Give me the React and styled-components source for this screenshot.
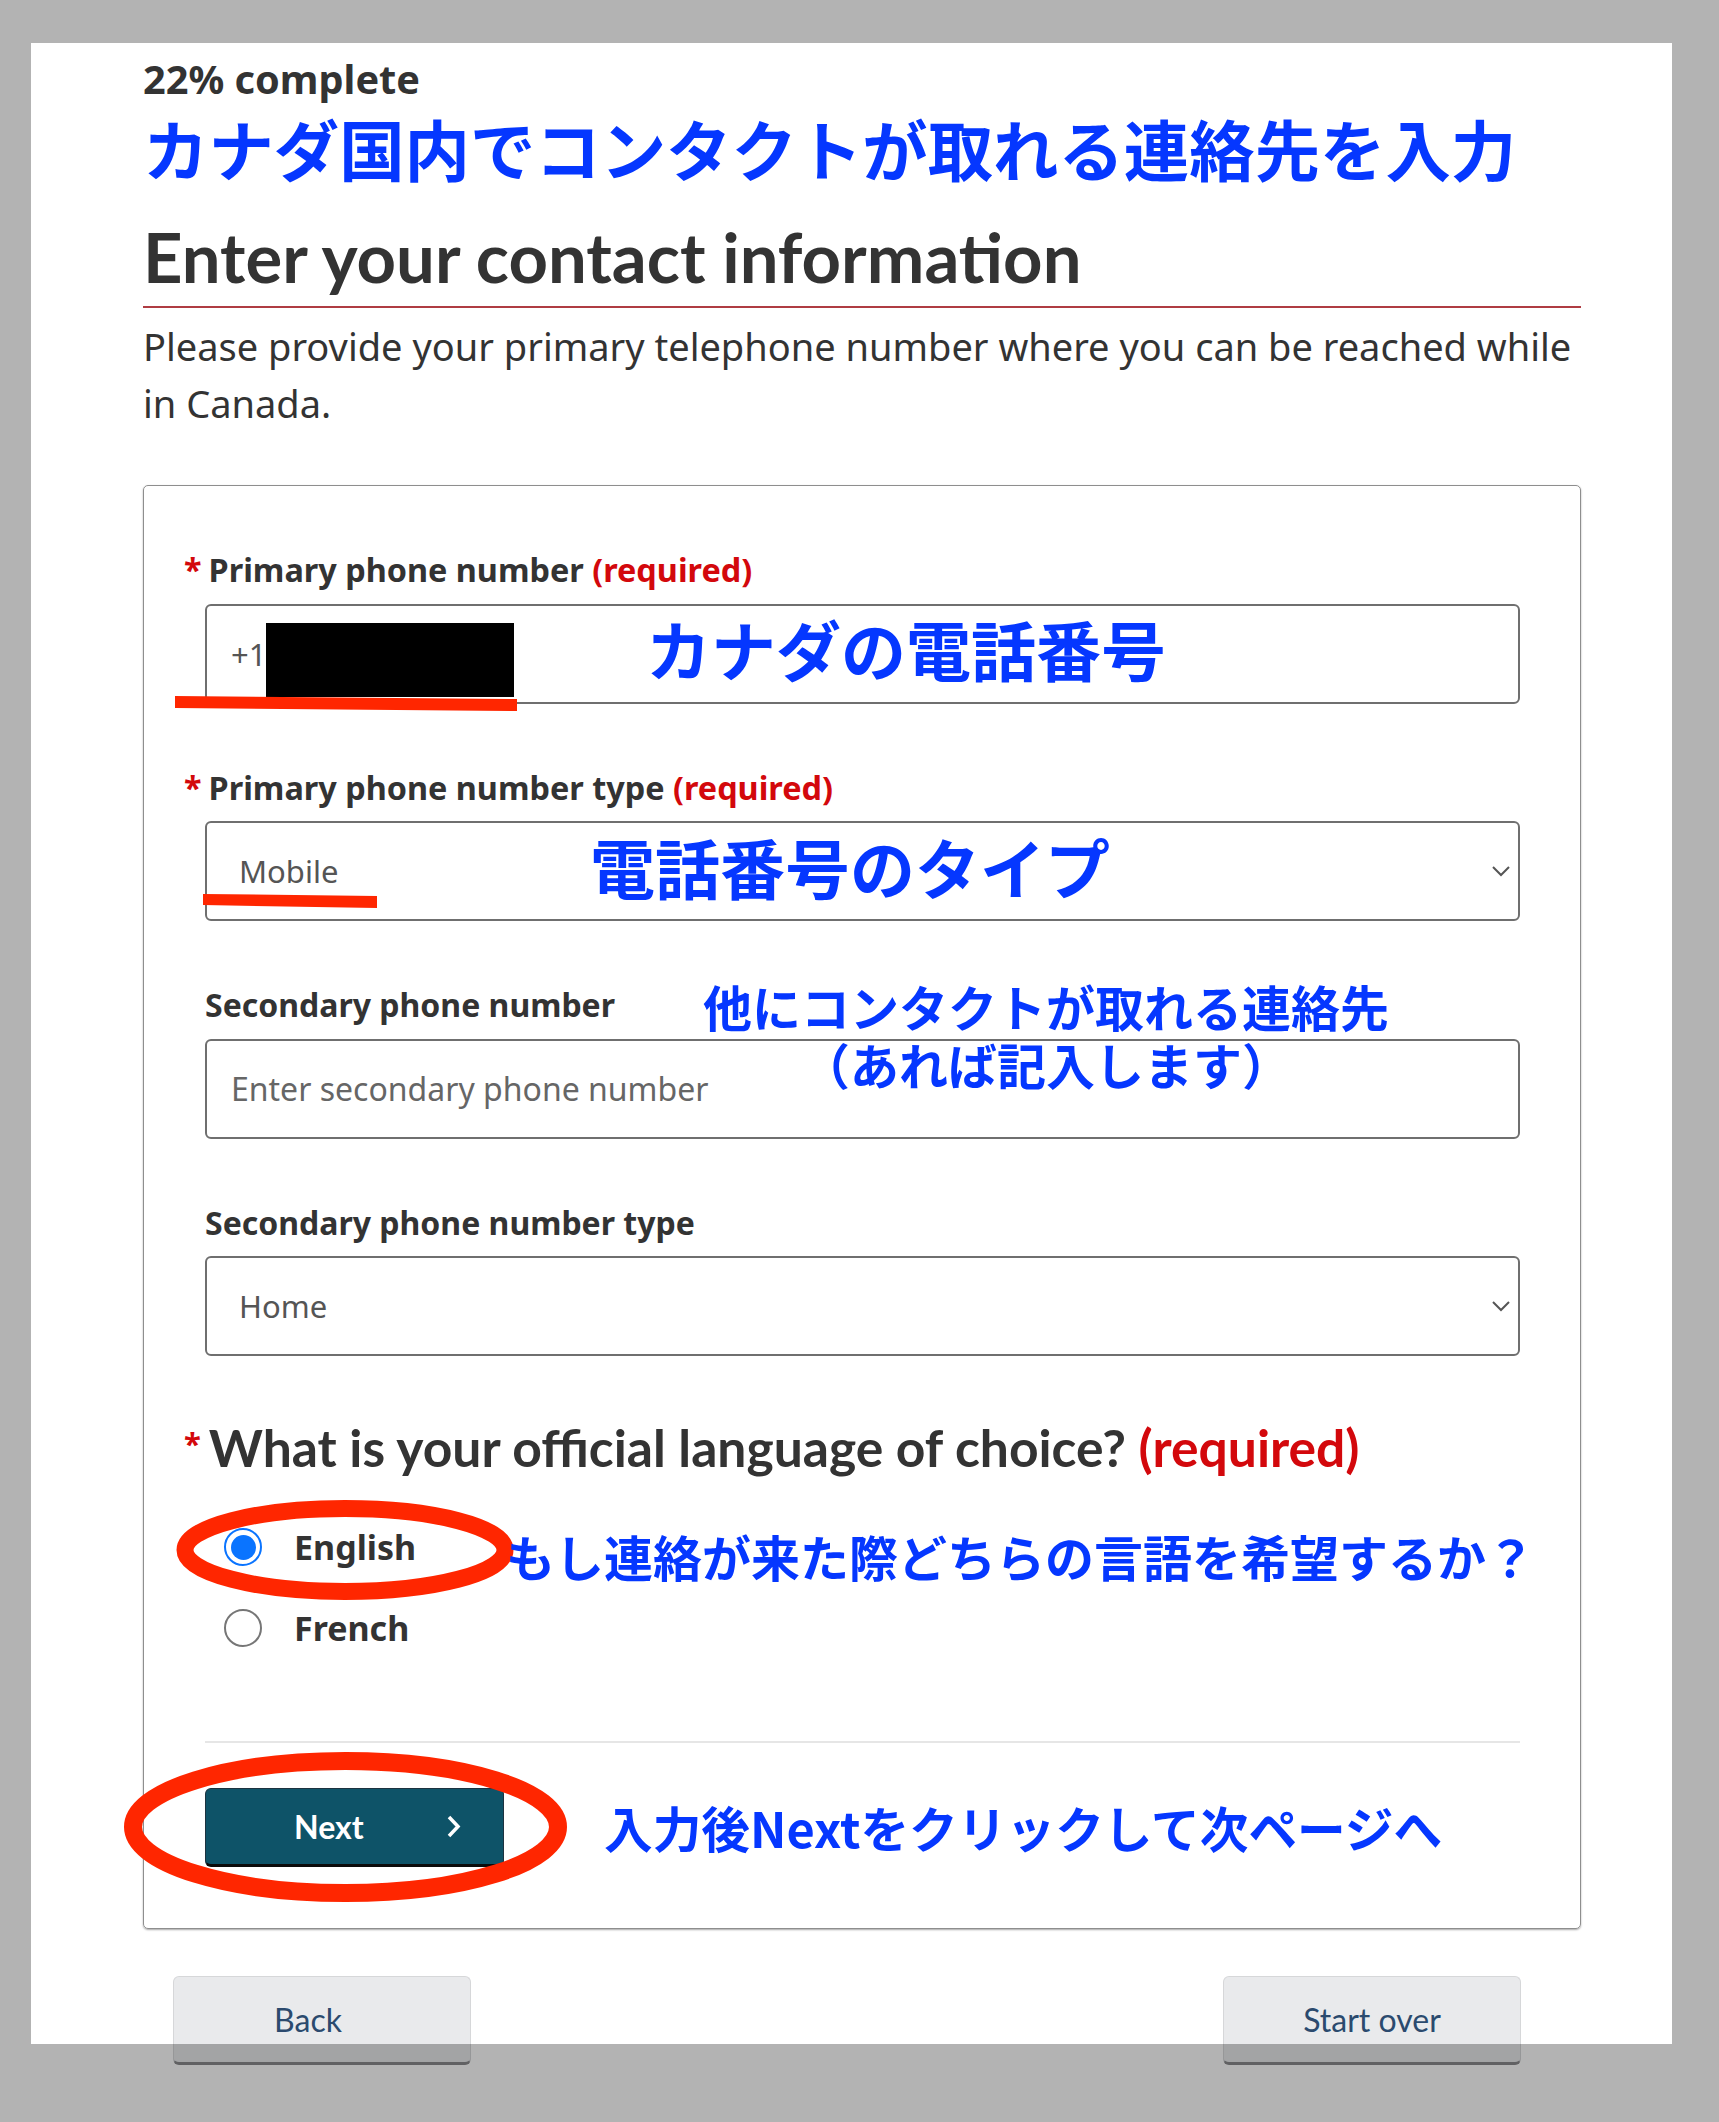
import React from "react";
import styled, { createGlobalStyle } from "styled-components";

const GlobalStyle = createGlobalStyle`
  html, body {
    margin: 0;
    padding: 0;
    background: #b3b3b3;
  }
  body {
    font-family: "Noto Sans", "Noto Sans CJK JP", sans-serif;
    color: #333;
  }
`;

const Root = styled.div`
  position: relative;
  width: 1719px;
  height: 2122px;
  padding: 43px 0 0 31px;
  box-sizing: border-box;
  overflow: hidden;
`;

const Sheet = styled.main`
  position: relative;
  width: 1641px;
  height: 2079px;
  box-sizing: border-box;
  padding: 11.5px 91px 0 112px;
  background: #fff;
`;

const Progress = styled.p`
  margin: 0;
  font-size: 39.7px;
  font-weight: 700;
  line-height: 48px;
`;

const BlueTitle = styled.div`
  margin-top: 6px;
  font-family: "Noto Sans CJK JP", sans-serif;
  font-size: 65.4px;
  font-weight: 700;
  line-height: 78px;
  color: #0537ff;
  white-space: nowrap;
`;

const Heading = styled.h1`
  margin: 29px 0 0;
  padding-bottom: 8.5px;
  border-bottom: 2px solid #af3c43;
  font-family: Lato, sans-serif;
  font-size: 68.8px;
  font-weight: 700;
  line-height: 81.6px;
  color: #333;
`;

const Intro = styled.p`
  margin: 10px 0 0;
  font-size: 38px;
  line-height: 57px;
`;

const Card = styled.section`
  margin-top: 53.5px;
  padding: 62.3px 60px 61px 61px;
  border: 1px solid #8e8e8e;
  border-radius: 5px;
  box-shadow: 0 1px 2px rgba(0, 0, 0, 0.35);
`;

const Field = styled.div`
  margin-bottom: ${(p) => (p.$last ? 0 : 62)}px;
`;

const Label = styled.div`
  margin: 0 0 12px ${(p) => (p.$required ? -21 : 0)}px;
  font-size: ${(p) => (p.$required ? 32.4 : 32)}px;
  font-weight: 700;
  line-height: 43.4px;
  color: #333;
`;

const Star = styled.span`
  color: #d3080c;
  margin-right: 7px;
`;

const Req = styled.span`
  color: #d3080c;
`;

const InputBox = styled.div`
  display: flex;
  align-items: center;
  height: 100px;
  box-sizing: border-box;
  padding: 0 8px 0 ${(p) => (p.$select ? 32 : 24)}px;
  border: 2px solid #6f6f6f;
  border-radius: 6px;
  font-size: 31px;
  color: #555;
`;

const TextInput = styled.input`
  flex: 1;
  border: none;
  outline: none;
  padding: 0;
  background: transparent;
  font-family: "Noto Sans", sans-serif;
  font-size: 32px;
  color: #555;
  &::placeholder {
    color: #666;
  }
`;

const Select = styled.select`
  flex: 1;
  appearance: none;
  border: none;
  outline: none;
  padding: 0;
  background: transparent;
  font-family: "Noto Sans", sans-serif;
  font-size: 31px;
  color: #555;
`;

const Legend = styled.div`
  margin: 60px 0 0 -21px;
  font-family: Lato, sans-serif;
  font-size: 51.6px;
  font-weight: 700;
  line-height: 62.4px;
  color: #333;
`;

const LegendStar = styled.span`
  font-family: "Noto Sans", sans-serif;
  font-size: 31px;
  line-height: 1;
  color: #d3080c;
  margin-right: 8px;
  vertical-align: 12px;
`;

const RadioList = styled.div`
  margin-top: 28.5px;
  padding-left: 19px;
`;

const RadioRow = styled.label`
  display: flex;
  align-items: center;
  gap: 32px;
  height: 81px;
  font-size: 34px;
  font-weight: 700;
  color: #333;
`;

const RadioDot = styled.span`
  width: 38px;
  height: 38px;
  box-sizing: border-box;
  border-radius: 50%;
  border: 2px solid ${(p) => (p.$checked ? "#0a74ff" : "#767676")};
  display: flex;
  align-items: center;
  justify-content: center;
  &::after {
    content: "";
    width: 25px;
    height: 25px;
    border-radius: 50%;
    background: ${(p) => (p.$checked ? "#0a74ff" : "transparent")};
  }
`;

const Divider = styled.hr`
  margin: 72.4px 0 0;
  height: 2px;
  border: none;
  background: #e6e6e6;
`;

const NextButton = styled.button`
  margin-top: 45px;
  display: flex;
  align-items: center;
  width: 299px;
  height: 79px;
  box-sizing: border-box;
  padding: 0 41px 0 88px;
  border: 1px solid #1c3340;
  border-bottom: 3px solid #0b0b0b;
  border-radius: 6px;
  background: #0e5368;
  color: #fff;
  font-family: Lato, sans-serif;
  font-size: 32px;
  font-weight: 700;
  svg {
    margin-left: auto;
  }
`;

const ButtonRow = styled.div`
  margin-top: 47px;
  display: flex;
  justify-content: space-between;
  padding: 0 60px 0 30px;
`;

const GreyButton = styled.button`
  width: 298px;
  height: 89px;
  box-sizing: border-box;
  padding: 0 ${(p) => (p.$shift ? 28 : 0)}px 0 0;
  border: 1px solid #d6d7d9;
  border-bottom: 3px solid #8a8b8d;
  border-radius: 6px;
  background: #e9eaec;
  color: #2b4a6e;
  font-family: Lato, sans-serif;
  font-size: 32px;
`;

const BottomShade = styled.div`
  position: absolute;
  left: 0;
  right: 0;
  bottom: 0;
  height: 78px;
  background: rgba(0, 0, 0, 0.298);
`;

const Markup = styled.svg`
  position: absolute;
  left: 0;
  top: 0;
  pointer-events: none;
`;

const Note = styled.div`
  position: absolute;
  left: ${(p) => p.$x}px;
  top: ${(p) => p.$y}px;
  width: ${(p) => (p.$w ? `${p.$w}px` : "auto")};
  font-family: "Noto Sans CJK JP", sans-serif;
  font-size: ${(p) => p.$size}px;
  font-weight: 700;
  line-height: ${(p) => p.$lh || 1};
  color: #0537ff;
  text-align: ${(p) => (p.$center ? "center" : "left")};
  white-space: nowrap;
`;

const Chevron = () => (
  <svg width="18" height="11" viewBox="0 0 18 11">
    <polyline points="1,1 9,9 17,1" fill="none" stroke="#555" strokeWidth="2" />
  </svg>
);

const fields = [
  { label: "Primary phone number", required: true, kind: "phone" },
  { label: "Primary phone number type", required: true, kind: "select", value: "Mobile" },
  { label: "Secondary phone number", kind: "input", placeholder: "Enter secondary phone number" },
  { label: "Secondary phone number type", kind: "select", value: "Home" },
];

const App = () => {
  return (
    <Root>
      <GlobalStyle />
      <Sheet>
        <Progress>22% complete</Progress>
        <BlueTitle>カナダ国内でコンタクトが取れる連絡先を入力</BlueTitle>
        <Heading>Enter your contact information</Heading>
        <Intro>
          Please provide your primary telephone number where you can be reached while in Canada.
        </Intro>

        <Card>
          {fields.map((f, i) => (
            <Field key={f.label} $last={i === fields.length - 1}>
              <Label $required={f.required}>
                {f.required && <Star>*</Star>}
                {f.label}
                {f.required && <Req> (required)</Req>}
              </Label>
              {f.kind === "phone" && <InputBox>+1</InputBox>}
              {f.kind === "input" && (
                <InputBox>
                  <TextInput placeholder={f.placeholder} />
                </InputBox>
              )}
              {f.kind === "select" && (
                <InputBox $select>
                  <Select defaultValue={f.value}>
                    <option>{f.value}</option>
                  </Select>
                  <Chevron />
                </InputBox>
              )}
            </Field>
          ))}

          <Legend>
            <LegendStar>*</LegendStar>
            What is your official language of choice? <Req>(required)</Req>
          </Legend>
          <RadioList>
            <RadioRow>
              <RadioDot $checked />
              English
            </RadioRow>
            <RadioRow>
              <RadioDot />
              French
            </RadioRow>
          </RadioList>

          <Divider />
          <NextButton>
            Next
            <svg width="16" height="23" viewBox="0 0 16 23">
              <polyline points="3,2 12,11.5 3,21" fill="none" stroke="#fff" strokeWidth="3.5" />
            </svg>
          </NextButton>
        </Card>

        <ButtonRow>
          <GreyButton $shift>Back</GreyButton>
          <GreyButton>Start over</GreyButton>
        </ButtonRow>
        <BottomShade />
      </Sheet>

      <Markup width="1719" height="2122" viewBox="0 0 1719 2122">
        <rect x="266" y="623" width="248" height="74" fill="#000" />
        <polygon points="175,696 517,699 517,711 175,708" fill="#ff2600" />
        <polygon points="203,894 377,896 377,908 203,905" fill="#ff2600" />
        <ellipse cx="345" cy="1550" rx="160" ry="41.5" fill="none" stroke="#ff2600" strokeWidth="17" />
        <ellipse cx="345.5" cy="1827" rx="212.5" ry="66" fill="none" stroke="#ff2600" strokeWidth="18" />
      </Markup>

      <Note $x={646} $y={616} $size={65}>カナダの電話番号</Note>
      <Note $x={590} $y={834} $size={65}>電話番号のタイプ</Note>
      <Note $x={646} $y={977} $w={800} $size={49} $lh="58px" $center>
        他にコンタクトが取れる連絡先
        <br />
        （あれば記入します）
      </Note>
      <Note $x={506} $y={1531} $size={49}>もし連絡が来た際どちらの言語を希望するか？</Note>
      <Note $x={604} $y={1803} $size={48.7}>入力後Nextをクリックして次ページへ</Note>
    </Root>
  );
};

export default App;
